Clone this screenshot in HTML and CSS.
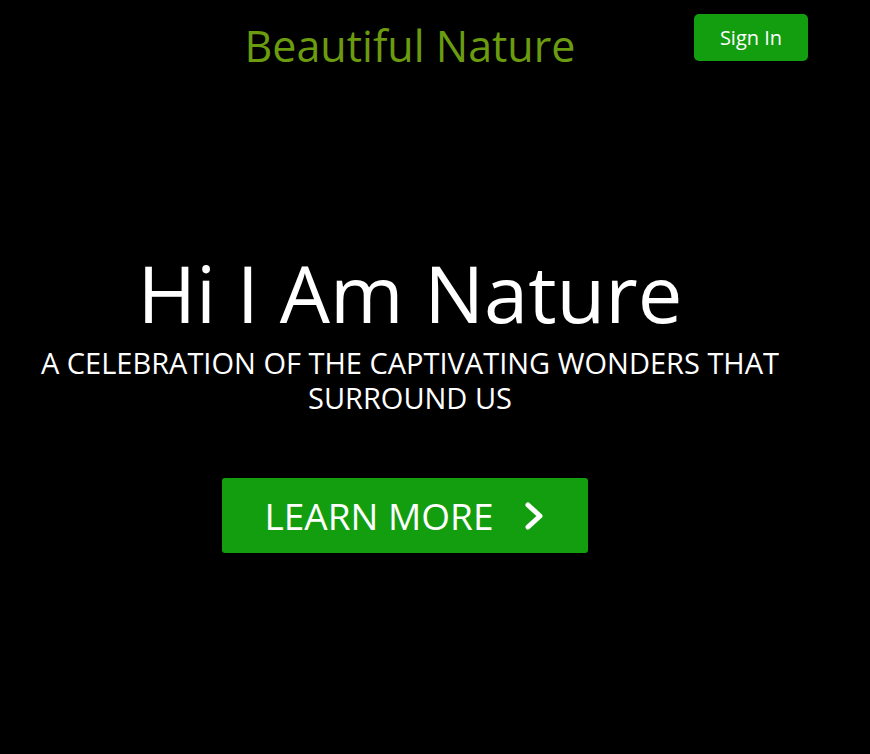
FILE: index.html
```html
<!DOCTYPE html>
<html lang="en">
<head>
<meta charset="utf-8">
<title>Beautiful Nature</title>
<link rel="stylesheet" href="styles.css">
</head>
<body>
<div class="page">
  <header class="topbar">
    <div class="spacer"></div>
    <h2 class="brand">Beautiful Nature</h2>
    <div class="actions">
      <button class="signin">Sign In</button>
    </div>
  </header>
  <section class="hero">
    <h1 class="hero-title">Hi I Am Nature</h1>
    <p class="hero-sub">A celebration of the captivating wonders that surround us</p>
    <div class="cta-row">
      <button class="cta">LEARN MORE
        <svg class="chev" viewBox="0 0 24 30" width="24" height="30" aria-hidden="true">
          <path d="M6 4 L18 15 L6 26" fill="none" stroke="#fff" stroke-width="5" stroke-linecap="round" stroke-linejoin="round"/>
        </svg>
      </button>
    </div>
  </section>
</div>
</body>
</html>
```
FILE: styles.css
```css
html, body {
  margin: 0;
  padding: 0;
  background: #000;
  height: 100%;
}
body {
  font-family: "Open Sans", "Noto Sans", sans-serif;
  color: #fff;
}
.page {
  width: 820px;
}
.topbar {
  display: grid;
  grid-template-columns: 1fr auto 1fr;
  align-items: start;
}
.brand {
  margin: 16px 0 0;
  font-size: 43px;
  font-weight: 400;
  line-height: normal;
  color: #6b9b0f;
  text-align: center;
}
.actions {
  display: flex;
  justify-content: flex-end;
  padding-top: 14px;
  padding-right: 12px;
}
.signin {
  width: 114px;
  height: 47px;
  background: #139e0f;
  color: #fff;
  border: none;
  border-radius: 5px;
  font-family: inherit;
  font-size: 20px;
  cursor: pointer;
}
.hero {
  text-align: center;
}
.hero-title {
  margin: 170px 0 0;
  font-size: 79.5px;
  font-weight: 400;
  line-height: 94px;
}
.hero-sub {
  margin: 6px 0 0;
  font-size: 29px;
  line-height: 35px;
  text-transform: uppercase;
  padding: 0 20px;
}
.cta-row {
  display: flex;
  justify-content: center;
  margin-top: 63px;
}
.cta {
  margin-right: 10px;
  width: 366px;
  height: 75px;
  background: #139e0f;
  color: #fff;
  border: none;
  border-radius: 3px;
  font-family: inherit;
  font-size: 37px;
  display: flex;
  align-items: center;
  justify-content: center;
  gap: 28px;
  cursor: pointer;
  padding: 0;
}
.chev {
  display: block;
}
```
